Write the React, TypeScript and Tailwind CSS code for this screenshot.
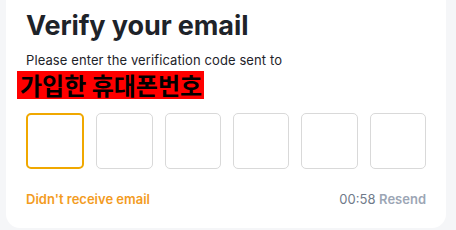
export default function App() {
  const slots = [0, 1, 2, 3, 4, 5];

  return (
    <div className="w-[456px] h-[230px] bg-[#f5f6f8] pl-[6px] pr-[10px] pb-[2px] font-['Inter','Noto_Sans',sans-serif]">
      <div className="h-full bg-white rounded-b-[14px] px-5 pt-[10px] flex flex-col">
        <h1 className="text-[27px] leading-[32px] font-bold text-[#1e2329] tracking-[-0.1px]">Verify your email</h1>

        <p className="mt-[11px] text-[13px] leading-[14px] tracking-[0.1px] text-[#1e2329]">
          Please enter the verification code sent to
        </p>
        <div className="mt-[4px]">
          <span className="-ml-[9px] inline-block bg-[#ff0000] pl-[3px] pr-[2px] h-[28px] text-[24px] leading-[28px] font-bold text-black font-['Noto_Sans_CJK_KR',sans-serif]">
            가입한 휴대폰번호
          </span>
        </div>

        <div className="mt-[12px] flex gap-3">
          {slots.map((i) => (
            <div
              key={i}
              className={
                i === 0
                  ? 'flex-1 min-w-0 h-[56px] rounded-[5px] border-2 border-[#f0a800]'
                  : 'flex-1 min-w-0 h-[56px] rounded-[5px] border border-[#d9d9d9]'
              }
            />
          ))}
        </div>

        <div className="mt-[22px] flex items-center justify-between text-[13px] leading-[16px]">
          <span className="font-semibold text-[#f39c1f]">Didn't receive email</span>
          <span>
            <span className="text-[#707a8a]">00:58</span>{' '}
            <span className="font-semibold text-[#9ca6b5]">Resend</span>
          </span>
        </div>
      </div>
    </div>
  );
}
